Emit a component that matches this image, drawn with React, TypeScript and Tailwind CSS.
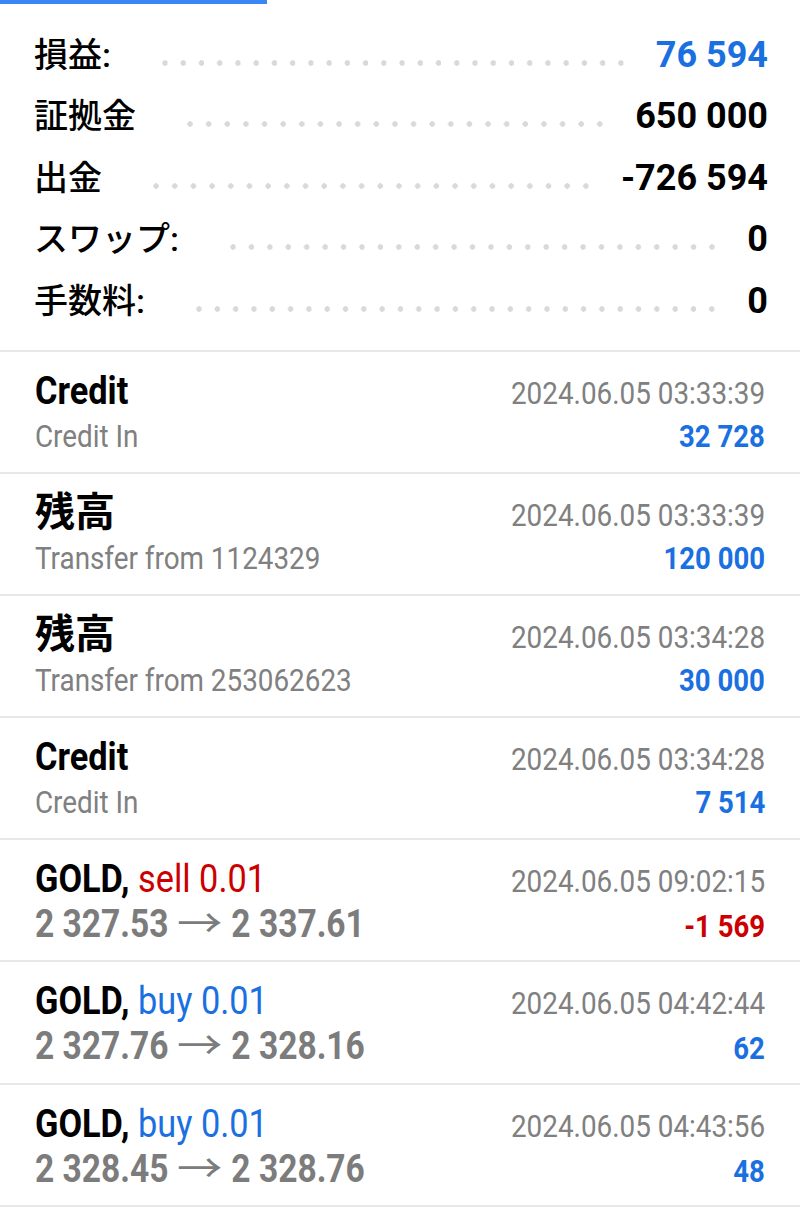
import React from "react";

const FONT = { fontFamily: "Roboto, 'Noto Sans CJK JP', 'DejaVu Sans', sans-serif" };

type SummaryRow = { label: string; value: string; blue?: boolean };

const summary: SummaryRow[] = [
  { label: "損益:", value: "76 594", blue: true },
  { label: "証拠金", value: "650 000" },
  { label: "出金", value: "-726 594" },
  { label: "スワップ:", value: "0" },
  { label: "手数料:", value: "0" },
];

type Item = {
  title: string;
  cjk?: boolean;
  side?: { text: string; color: "red" | "blue" };
  sub?: string;
  price?: [string, string];
  date: string;
  amount: string;
  amountRed?: boolean;
};

const items: Item[] = [
  { title: "Credit", sub: "Credit In", date: "2024.06.05 03:33:39", amount: "32 728" },
  { title: "残高", cjk: true, sub: "Transfer from 1124329", date: "2024.06.05 03:33:39", amount: "120 000" },
  { title: "残高", cjk: true, sub: "Transfer from 253062623", date: "2024.06.05 03:34:28", amount: "30 000" },
  { title: "Credit", sub: "Credit In", date: "2024.06.05 03:34:28", amount: "7 514" },
  {
    title: "GOLD,",
    side: { text: "sell 0.01", color: "red" },
    price: ["2 327.53", "2 337.61"],
    date: "2024.06.05 09:02:15",
    amount: "-1 569",
    amountRed: true,
  },
  {
    title: "GOLD,",
    side: { text: "buy 0.01", color: "blue" },
    price: ["2 327.76", "2 328.16"],
    date: "2024.06.05 04:42:44",
    amount: "62",
  },
  {
    title: "GOLD,",
    side: { text: "buy 0.01", color: "blue" },
    price: ["2 328.45", "2 328.76"],
    date: "2024.06.05 04:43:56",
    amount: "48",
  },
];

function Summary() {
  return (
    <div className="border-b-2 border-[#e8e8e8] pt-[20px] pb-[18px] pl-[34px] pr-[32px]">
      {summary.map((r, i) => (
        <div key={i} className="flex h-[61.5px] items-center">
          <span className="text-[34px] font-medium text-black whitespace-nowrap leading-none">{r.label}</span>
          <div className="ml-[45px] mr-[26px] mt-[16px] h-[6px] flex-1 bg-[radial-gradient(circle,#d9d9d9_2.5px,transparent_3px)] bg-[length:18px_6px] bg-repeat-space" />
          <span
            className={
              r.blue
                ? "text-[36px] font-bold text-[#1a70e0] whitespace-nowrap leading-none"
                : "text-[36px] font-bold text-black whitespace-nowrap leading-none"
            }
          >
            {r.value}
          </span>
        </div>
      ))}
    </div>
  );
}

function ListItem({ it }: { it: Item }) {
  return (
    <div className="h-[122.2px] border-b-2 border-[#e8e8e8] px-[35px] pt-[17px]">
      <div className="flex items-baseline justify-between leading-[44px]">
        {it.cjk ? (
          <span className="text-[40px] font-bold text-black whitespace-nowrap">{it.title}</span>
        ) : (
          <span className="inline-block origin-left scale-x-[0.88] whitespace-nowrap text-[39px]">
            <span className="font-bold text-black">{it.title}</span>
            {it.side ? (
              <span className={it.side.color === "red" ? "text-[#cc0000]" : "text-[#1a70e0]"}> {it.side.text}</span>
            ) : null}
          </span>
        )}
        <span className="inline-block origin-right scale-x-[0.87] whitespace-nowrap text-[32px] text-[#808080]">
          {it.date}
        </span>
      </div>
      <div className="flex items-baseline justify-between leading-[42px]">
        {it.price ? (
          <span className="inline-block origin-left scale-x-[0.86] whitespace-nowrap text-[39px] font-bold text-[#7c7c7c]">
            {it.price[0]}
            <span className="mx-[17px] inline-block scale-x-[1.35] font-normal">→</span>
            {it.price[1]}
          </span>
        ) : (
          <span className="inline-block origin-left scale-x-[0.87] whitespace-nowrap text-[32px] text-[#808080]">
            {it.sub}
          </span>
        )}
        <span
          className={
            it.amountRed
              ? "inline-block origin-right scale-x-[0.86] whitespace-nowrap text-[32px] font-bold text-[#cc0000]"
              : "inline-block origin-right scale-x-[0.86] whitespace-nowrap text-[32px] font-bold text-[#1a70e0]"
          }
        >
          {it.amount}
        </span>
      </div>
    </div>
  );
}

export default function App() {
  return (
    <div className="w-[800px] h-[1219px] overflow-hidden bg-white" style={FONT}>
      <div className="h-[4px] w-[267px] bg-[#3a86f5]" />
      <Summary />
      {items.map((it, i) => (
        <ListItem key={i} it={it} />
      ))}
    </div>
  );
}
